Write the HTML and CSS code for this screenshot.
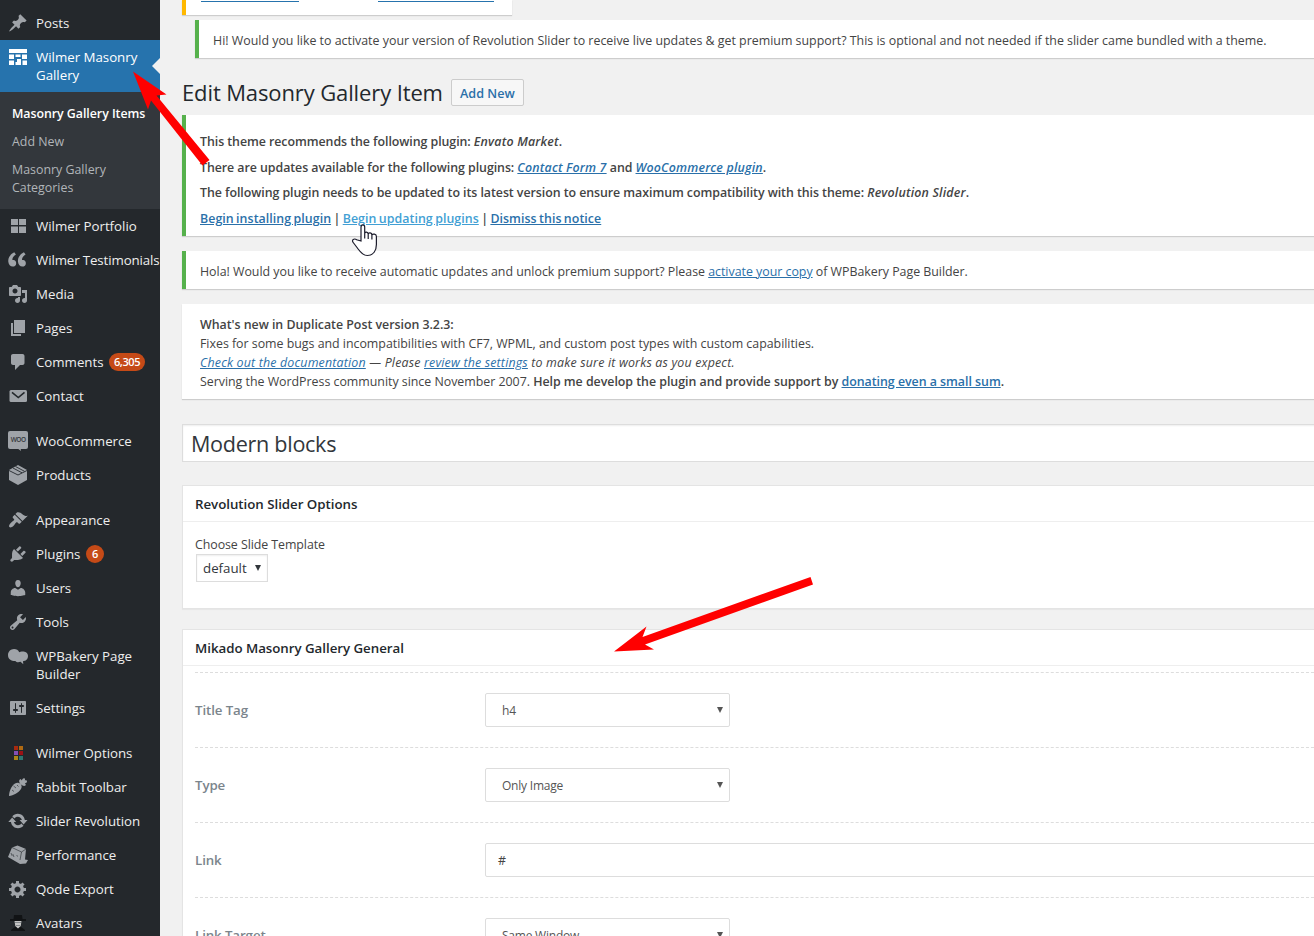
FILE: index.html
```html
<!DOCTYPE html>
<html lang="en">
<head>
  <meta charset="UTF-8">
  <title>Edit Masonry Gallery Item</title>
  <link rel="stylesheet" href="styles.css">
</head>
<body>

<div class="layout">
  <nav class="sidebar">
    <a class="menu-item">
      <svg class="icon" viewBox="0 0 20 20"><path d="M10.44 3.02l1.82-1.82 6.36 6.35-1.83 1.82c-1.05-.68-2.48-.57-3.41.36l-.75.75c-.92.93-1.04 2.35-.35 3.41l-1.83 1.82-2.41-2.41-2.8 2.79c-.42.42-3.38 2.71-3.8 2.29s1.86-3.39 2.28-3.81l2.79-2.79L4.1 9.36l1.83-1.82c1.05.69 2.48.57 3.4-.36l.75-.75c.93-.92 1.05-2.35.36-3.41z"/></svg>
      <span>Posts</span>
    </a>
    <a class="menu-item current">
      <svg class="icon" viewBox="0 0 20 20"><path d="M1 2h18v4H1zM1 12V7.500h5V12zM7.500 10V7.500h5V10zM14 12V7.500h5V12zM7.500 18v-3H9v-3h4v6zM1 18v-4.500h5V18zM14.500 18v-4.500H19V18z"/></svg>
      <span>Wilmer Masonry Gallery</span>
    </a>
    <div class="submenu">
      <a class="active">Masonry Gallery Items</a>
      <a>Add New</a>
      <a>Masonry Gallery Categories</a>
    </div>
    <a class="menu-item">
      <svg class="icon" viewBox="0 0 20 20"><path d="M3 3h7v6H3zM11 3h7v6h-7zM3 10.500h7V17H3zM11 10.500h7V17h-7z"/></svg>
      <span>Wilmer Portfolio</span>
    </a>
    <a class="menu-item nowrap">
      <svg class="icon" viewBox="0 0 20 20"><path transform="translate(-3.200 -2.600) scale(1.200)" d="M9.490 13.220c0-.74-.2-1.380-.61-1.900-.62-.78-1.830-.88-2.530-.72-.29-1.650 1.110-3.750 2.920-4.650L7.880 4c-2.730 1.300-5.420 4.280-4.960 8.050C3.210 14.430 4.590 16 6.540 16c.85 0 1.560-.25 2.120-.75s.83-1.180.83-2.030zm8.050 0c0-.74-.2-1.380-.61-1.900-.63-.78-1.830-.88-2.530-.72-.29-1.650 1.110-3.750 2.920-4.650L15.930 4c-2.730 1.300-5.410 4.280-4.950 8.050.29 2.380 1.660 3.950 3.610 3.950.85 0 1.560-.25 2.120-.75s.83-1.180.83-2.030z"/></svg>
      <span>Wilmer Testimonials</span>
    </a>
    <a class="menu-item">
      <svg class="icon" viewBox="0 0 20 20"><path d="M13 11V4c0-.55-.45-1-1-1h-1.670L9 1H5L3.670 3H2c-.55 0-1 .45-1 1v7c0 .55.45 1 1 1h10c.55 0 1-.45 1-1zM7 4.500c1.380 0 2.500 1.120 2.500 2.500S8.380 9.500 7 9.500 4.500 8.380 4.500 7 5.620 4.500 7 4.500zM14 6h5v10.500c0 1.380-1.120 2.500-2.500 2.500S14 17.880 14 16.500s1.120-2.500 2.500-2.500c.17 0 .34.020.5.050V9h-3V6zm-4 8.050V13h2v3.500c0 1.380-1.120 2.500-2.500 2.500S7 17.880 7 16.500 8.120 14 9.500 14c.17 0 .34.020.5.050z"/></svg>
      <span>Media</span>
    </a>
    <a class="menu-item">
      <svg class="icon" viewBox="0 0 20 20"><path d="M6 15V2h11v13H6zm-1 1h8v2H3V5h2v11z"/></svg>
      <span>Pages</span>
    </a>
    <a class="menu-item">
      <svg class="icon" viewBox="0 0 20 20"><path d="M5 2h9.500c1.100 0 2 .9 2 2v7c0 1.100-.9 2-2 2H12l-5 5v-5H5c-1.100 0-2-.9-2-2V4c0-1.100.9-2 2-2z"/></svg>
      <span>Comments <b class="count">6,305</b></span>
    </a>
    <a class="menu-item">
      <svg class="icon" viewBox="0 0 20 20"><rect x="1.500" y="4" width="17.500" height="12" rx="1.500"/><path class="cut" d="M4 6.300l6.300 5.200 6.200-5.200"/></svg>
      <span>Contact</span>
    </a>
    <a class="menu-item spaced">
      <svg class="icon" viewBox="0 0 20 20"><rect width="20" height="18" rx="2"/><path d="M9 17l4 3-.5-3z"/><text class="woo" x="2.700" y="11.200">WOO</text></svg>
      <span>WooCommerce</span>
    </a>
    <a class="menu-item">
      <svg class="icon" viewBox="0 0 20 20"><path d="M10 0l9 5v10l-9 5-9-5V5z"/><path class="cut thin" d="M1 5.500l9 4.500 9-4.500M5 3l9 4.800M7.500 1.500l9 4.800"/></svg>
      <span>Products</span>
    </a>
    <a class="menu-item spaced">
      <svg class="icon" viewBox="0 0 20 20"><path d="M14.480 11.060L7.410 3.990l1.500-1.500c.5-.56 2.300-.47 3.510.32 1.210.8 1.430 1.280 2.910 2.100 1.180.64 2.450 1.260 4.450.85zm-.71.71L6.700 4.700 4.930 6.470c-.39.39-.39 1.020 0 1.410l1.060 1.060c.39.39.39 1.030 0 1.420-.6.6-1.430 1.110-2.210 1.690-.35.26-.7.53-1.010.84C1.430 14.230.4 16.080 1.400 17.070c.99 1 2.840-.03 4.180-1.360.31-.31.58-.66.85-1.020.57-.78 1.080-1.610 1.690-2.210.39-.39 1.020-.39 1.410 0l1.060 1.060c.39.39 1.020.39 1.410 0z"/></svg>
      <span>Appearance</span>
    </a>
    <a class="menu-item">
      <svg class="icon" viewBox="0 0 20 20"><path d="M13.110 4.360L9.870 7.600 8 5.730l3.240-3.240c.35-.34 1.050-.2 1.560.32.52.51.66 1.210.31 1.550zm-8 1.770l.91-1.120 9.010 9.010-1.190.84c-.71.71-2.630 1.160-3.820 1.160H6.140L4.900 17.260c-.59.59-1.540.59-2.120 0-.59-.58-.59-1.530 0-2.120l1.240-1.240v-3.880c0-1.130.4-3.190 1.090-3.890zm7.260 3.970l3.240-3.240c.34-.35 1.040-.21 1.550.31.52.51.66 1.210.31 1.550l-3.240 3.250z"/></svg>
      <span>Plugins <b class="count">6</b></span>
    </a>
    <a class="menu-item">
      <svg class="icon" viewBox="0 0 20 20"><path d="M10 9.250c-2.270 0-2.730-3.440-2.730-3.440C7 4.020 7.820 2 9.970 2c2.160 0 2.980 2.020 2.710 3.810 0 0-.41 3.440-2.680 3.440zm0 2.570L12.720 10c2.390 0 4.520 2.330 4.520 4.530v2.490s-3.650 1.130-7.240 1.130c-3.650 0-7.240-1.130-7.240-1.130v-2.490c0-2.250 1.940-4.480 4.470-4.480z"/></svg>
      <span>Users</span>
    </a>
    <a class="menu-item">
      <svg class="icon" viewBox="0 0 20 20"><path d="M16.680 9.770c-1.340 1.340-3.300 1.670-4.950.99l-5.410 6.520c-.99.99-2.590.99-3.580 0s-.99-2.590 0-3.570l6.520-5.420c-.68-1.650-.35-3.610.99-4.950 1.280-1.280 3.120-1.620 4.720-1.060l-2.890 2.890 2.820 2.820 2.860-2.870c.53 1.580.18 3.390-1.080 4.650zM3.810 16.210c.4.39 1.040.39 1.430 0 .4-.4.4-1.040 0-1.430-.39-.4-1.030-.4-1.430 0-.39.39-.39 1.030 0 1.430z"/></svg>
      <span>Tools</span>
    </a>
    <a class="menu-item">
      <svg class="icon" viewBox="0 0 20 20"><path d="M6 3c2.500 0 4.300 1.200 5.200 3.200C13 5 20 4.500 20 10c0 3.500-2.500 5-5 5.200l.3 3-2.800-2.400c-2 .8-4 .7-5.200-.8C3 15 0 13 0 9c0-3.200 2.500-6 6-6z"/></svg>
      <span>WPBakery Page Builder</span>
    </a>
    <a class="menu-item">
      <svg class="icon" viewBox="0 0 20 20"><path d="M18 16V4c0-.55-.45-1-1-1H3c-.55 0-1 .45-1 1v12c0 .55.45 1 1 1h14c.55 0 1-.45 1-1zM8 11h1c.55 0 1 .45 1 1s-.45 1-1 1H8v1.500c0 .28-.22.5-.5.5s-.5-.22-.5-.5V13H6c-.55 0-1-.45-1-1s.45-1 1-1h1V5.500c0-.28.22-.5.5-.5s.5.220.5.5V11zm5-2h-1c-.55 0-1-.45-1-1s.45-1 1-1h1V5.500c0-.28.22-.5.5-.5s.5.220.5.5V7h1c.55 0 1 .45 1 1s-.45 1-1 1h-1v5.500c0 .28-.22.5-.5.5s-.5-.22-.5-.5V9z"/></svg>
      <span>Settings</span>
    </a>
    <a class="menu-item spaced">
      <svg class="icon" viewBox="0 0 20 20"><path fill="#a8290f" d="M6 3h4v4H6z"/><path fill="#b06a12" d="M11 3h4v4h-4z"/><path fill="#8350b5" d="M6 8h4v4H6z"/><path fill="#9b1114" d="M11 8h4v4h-4z"/><path fill="#ad8616" d="M6 13h4v4H6z"/><path fill="#2d7671" d="M11 13h4v4h-4z"/></svg>
      <span>Wilmer Options</span>
    </a>
    <a class="menu-item">
      <svg class="icon" viewBox="0 0 20 20"><path d="M1 19c0-4 2-10 6-12.500 2-1.200 4-1 5.500.5s1.500 3.500.3 5.300C10.500 16 5.500 18.500 1 19zM12 6.500c-1.500-2-1-4 .5-4.500L14 3.500c0-1.500 1-2.500 2.300-2.300.8.200.9 1.300.5 2.300 1.200-.5 2.200 0 2.200 1s-1 1.700-2.200 1.700c1 .5 1.200 1.500.7 2.300-1 .7-3 .5-4.500-1z"/><path class="cut hair" d="M5.500 9l2.500 2M9 8l1.500 1.500M4 13l2 1.500"/></svg>
      <span>Rabbit Toolbar</span>
    </a>
    <a class="menu-item">
      <svg class="icon" viewBox="0 0 20 20"><path d="M9.800 2.800c3.800 0 6.600 2.800 7 6.200h2.700L15.600 13.500 11.600 9h2.300c-.5-1.900-2.100-3.300-4.100-3.300-1.400 0-2.600.7-3.400 1.700L4.300 5.200c1.300-1.500 3.300-2.400 5.500-2.400zm.2 14.400c-3.800 0-6.600-2.800-7-6.200H.3L4.200 6.500 8.200 11H5.900c.5 1.900 2.100 3.300 4.100 3.300 1.400 0 2.600-.7 3.400-1.700l2.100 2.200c-1.300 1.500-3.300 2.400-5.500 2.400z"/></svg>
      <span>Slider Revolution</span>
    </a>
    <a class="menu-item">
      <svg class="icon" viewBox="0 0 20 20"><path d="M4 2.500L9.500.5 18 4l-1 10.500 3 .5-2 3.500-6 .5L0 12z"/><path class="cut hair" d="M4 2.500L13.500 7 18 4M13.500 7L12 15M3 8l1 2.500 1-1 1 2.500M8.500 10.500l1.500.8"/></svg>
      <span>Performance</span>
    </a>
    <a class="menu-item">
      <svg class="icon" viewBox="0 0 20 20"><path d="M18 12h-2.180c-.17.7-.44 1.350-.81 1.930l1.540 1.540-2.100 2.100-1.540-1.540c-.58.36-1.230.63-1.910.79V19H8v-2.180c-.68-.16-1.330-.43-1.910-.79l-1.540 1.540-2.120-2.120 1.540-1.540c-.36-.58-.63-1.230-.79-1.910H1V9.030h2.170c.16-.7.44-1.350.8-1.940L2.430 5.550l2.100-2.100 1.540 1.540c.58-.37 1.240-.64 1.930-.81V2h3v2.180c.68.16 1.330.43 1.910.79l1.540-1.540 2.120 2.120-1.540 1.540c.36.59.64 1.240.8 1.940H18V12zm-8.500 1.500c1.660 0 3-1.340 3-3s-1.340-3-3-3-3 1.340-3 3 1.340 3 3 3z"/></svg>
      <span>Qode Export</span>
    </a>
    <a class="menu-item">
      <svg class="icon" viewBox="0 0 20 20"><path fill="#111315" d="M6 2h8l.5 4H18v2H2V6h3.500zM3 17l4-3h6l4 3v1H3z"/><path fill="#c5c5c5" d="M6.500 8h7l-.8 5L10 15.500 7.300 13z"/><path fill="#85898c" d="M7 9h6v1H7zM8 12h4v1H8z"/></svg>
      <span>Avatars</span>
    </a>
  </nav>

  <main class="content">
    <div class="notice warning"><span class="line-a"></span><span class="line-b"></span></div>
    <div class="notice success inset"><p>Hi! Would you like to activate your version of Revolution Slider to receive live updates &amp; get premium support? This is optional and not needed if the slider came bundled with a theme.</p></div>

    <div class="heading">
      <h1>Edit Masonry Gallery Item</h1>
      <a class="add-new">Add New</a>
    </div>

    <div class="notice success strong">
      <p>This theme recommends the following plugin: <em>Envato Market</em>.</p>
      <p>There are updates available for the following plugins: <em><a>Contact Form 7</a></em> and <em><a>WooCommerce plugin</a></em>.</p>
      <p>The following plugin needs to be updated to its latest version to ensure maximum compatibility with this theme: <em>Revolution Slider</em>.</p>
      <p class="actions"><a>Begin installing plugin</a> | <a class="hover">Begin updating plugins</a> | <a>Dismiss this notice</a></p>
    </div>

    <div class="notice success hola"><p>Hola! Would you like to receive automatic updates and unlock premium support? Please <a>activate your copy</a> of WPBakery Page Builder.</p></div>

    <div class="notice plain">
      <p><b>What's new in Duplicate Post version 3.2.3:</b></p>
      <p>Fixes for some bugs and incompatibilities with CF7, WPML, and custom post types with custom capabilities.</p>
      <p><em><a>Check out the documentation</a> — Please <a>review the settings</a> to make sure it works as you expect.</em></p>
      <p>Serving the WordPress community since November 2007. <b>Help me develop the plugin and provide support by <a>donating even a small sum</a>.</b></p>
    </div>

    <div class="title-input">Modern blocks</div>

    <section class="postbox slider-options">
      <h2>Revolution Slider Options</h2>
      <div class="inside">
        <div class="label">Choose Slide Template</div>
        <div class="select small"><span>default</span><i class="caret"></i></div>
      </div>
    </section>

    <section class="postbox">
      <h2>Mikado Masonry Gallery General</h2>
      <div class="fields">
        <div class="field"><label>Title Tag</label><div class="select"><span>h4</span><i class="caret"></i></div></div>
        <div class="field"><label>Type</label><div class="select"><span>Only Image</span><i class="caret"></i></div></div>
        <div class="field"><label>Link</label><div class="text-input">#</div></div>
        <div class="field"><label>Link Target</label><div class="select"><span>Same Window</span><i class="caret"></i></div></div>
      </div>
    </section>
  </main>
</div>

<svg class="overlay" viewBox="0 0 1314 936">
  <path fill="#f00" d="M133 71.500L166.500 94.500 156.500 95.500 209.500 160 202.500 165.500 151 100.500 148 109.500z"/>
  <path fill="#f00" d="M614 651.500L646.500 626.500 642.500 637 810.500 577 813 584.500 645 644.500 654 649.500z"/>
  <path class="hand" d="M361 241V227.200c0-3 3.700-3 3.700 0v6.300c.3-2 3.400-1.800 3.500.5.500-1.700 3.600-1.500 3.700 1 .8-1.500 4.500-1.200 4.500 1.500v8c0 6-3 11-9 11-5 0-7.400-4-10-7.500l-4.200-5.500c-2-2.500 1-4.600 3.500-2.700zM364.700 233v5.500M368.200 234v5M371.900 235v4.500"/>
</svg>

</body>
</html>
```
FILE: styles.css
```css
* {
  box-sizing: border-box;
}

body {
  margin: 0;
  height: 936px;
  overflow: hidden;
  background: #f1f1f1;
  color: #444;
  font-family: "Open Sans", "Noto Sans", sans-serif;
  font-size: 12.4px;
  line-height: 19px;
}

p, h1, h2 {
  margin: 0;
}

.layout {
  display: flex;
  height: 936px;
  overflow: hidden;
}

/* sidebar */
.sidebar {
  flex: none;
  width: 160px;
  padding-top: 6px;
  background: #24282c;
  color: #eee;
  font-size: 13.3px;
  line-height: 18px;
  overflow: hidden;
}

.menu-item {
  display: flex;
  padding: 8px 0;
  position: relative;
}

.menu-item span {
  flex: 1;
  letter-spacing: -0.02px;
}

.menu-item.nowrap span {
  white-space: nowrap;
  letter-spacing: -0.12px;
}

.spaced {
  margin-top: 11px;
}

.icon {
  flex: none;
  width: 20px;
  height: 20px;
  margin: -1px 8px;
  fill: #9fa3a8;
}

.cut {
  fill: none;
  stroke: #24282c;
  stroke-width: 1.6;
}

.thin {
  stroke-width: 0.9;
}

.hair {
  stroke-width: 0.6;
}

.woo {
  fill: #35393d;
  font-size: 6.5px;
  font-weight: 600;
  letter-spacing: -0.5px;
}

.current {
  background: #2673ad;
  color: #fff;
}

.current .icon {
  fill: #fff;
}

.current::after {
  content: "";
  position: absolute;
  right: 0;
  top: 18px;
  border: 8px solid transparent;
  border-left: 0;
  border-right-color: #f1f1f1;
}

.submenu {
  display: flex;
  flex-direction: column;
  padding: 8px 0 7px;
  background: #33373c;
  color: #b1b5b9;
  font-size: 12.4px;
}

.submenu a {
  padding: 5px 12px;
}

.submenu .active {
  color: #fff;
  font-weight: 600;
  letter-spacing: -0.05px;
  white-space: nowrap;
}

.count {
  display: inline-block;
  min-width: 18px;
  height: 18px;
  margin: 0 0 -2px 2px;
  padding: 0 5px;
  border-radius: 9px;
  background: #c54a17;
  color: #fff;
  font-size: 11px;
  font-weight: 600;
  letter-spacing: -0.4px;
  text-align: center;
  vertical-align: top;
}

/* content */
.content {
  flex: none;
  width: 1180px;
  padding-left: 22px;
}

.content a {
  color: #2a70a9;
  text-decoration: underline;
}

.content a.hover {
  color: #429fd4;
}

.notice {
  padding: 11px 14px 8px;
  border-left: 4px solid #fff;
  background: #fff;
  box-shadow: 0 1px 1px rgba(0, 0, 0, 0.15);
  white-space: nowrap;
}

.notice em {
  letter-spacing: 0.18px;
}

.notice b {
  font-weight: 600;
  letter-spacing: -0.03px;
}

.success {
  border-color: #56b14c;
}

.warning {
  display: flex;
  width: 330px;
  height: 15px;
  padding: 0 15px;
  border-color: #ffb800;
}

.line-a {
  width: 98px;
  height: 2px;
  border-bottom: 1px solid #2673ad;
}

.line-b {
  width: 116px;
  height: 2px;
  margin-left: 79px;
  border-bottom: 1px solid #2673ad;
}

.inset {
  height: 38px;
  margin: 5px 0 0 13px;
}

.heading {
  display: flex;
  align-items: center;
  height: 27px;
  margin: 21px 0 9px;
}

h1 {
  color: #23282d;
  font-size: 22px;
  font-weight: 400;
  letter-spacing: -0.12px;
}

.content .add-new {
  width: 73px;
  height: 27px;
  margin-left: 8px;
  padding: 4px 0;
  border: 1px solid #ccc;
  border-radius: 2px;
  background: #f7f7f7;
  font-size: 12.6px;
  font-weight: 600;
  text-align: center;
  text-decoration: none;
}

.strong {
  height: 121px;
  padding-top: 17px;
  font-weight: 600;
  letter-spacing: -0.06px;
}

.strong p {
  height: 25.6px;
}

.strong .actions {
  letter-spacing: 0.05px;
  word-spacing: -0.9px;
}

.hola {
  height: 38px;
  margin: 15px 0;
  letter-spacing: -0.02px;
}

.plain {
  height: 95px;
  letter-spacing: -0.02px;
}

.title-input {
  height: 38px;
  margin: 25px 0 23px;
  padding: 9px 8px;
  border: 1px solid #ddd;
  background: #fff;
  box-shadow: inset 0 1px 2px rgba(0, 0, 0, 0.07);
  color: #32373c;
  font-size: 21.6px;
  letter-spacing: -0.3px;
}

.postbox {
  height: 320px;
  border: 1px solid #e4e4e4;
  background: #fff;
  box-shadow: 0 1px 1px rgba(0, 0, 0, 0.04);
}

.slider-options {
  height: 124px;
  margin-bottom: 20px;
}

h2 {
  height: 36px;
  padding: 9px 12px;
  border-bottom: 1px solid #eee;
  color: #23282d;
  font-size: 13.3px;
  font-weight: 600;
  letter-spacing: -0.03px;
}

.inside {
  padding: 13px 12px;
}

.label {
  letter-spacing: -0.07px;
}

.select {
  display: flex;
  align-items: center;
  justify-content: space-between;
  width: 245px;
  height: 34px;
  padding: 0 6px 0 16px;
  border: 1px solid #ddd;
  border-radius: 2px;
  color: #555;
  font-size: 12px;
  letter-spacing: -0.22px;
}

.small {
  width: 72px;
  height: 28px;
  margin-left: 1px;
  padding: 0 6px;
  border-radius: 0;
  box-shadow: inset 0 1px 2px rgba(0, 0, 0, 0.07);
  color: #32373c;
  font-size: 13.3px;
  letter-spacing: 0;
}

.caret {
  border: 3.5px solid transparent;
  border-top: 6px solid currentColor;
  border-bottom: 0;
}

.fields {
  padding: 6px 0 0 12px;
}

.field {
  display: flex;
  height: 75px;
  padding-top: 20px;
  border-top: 1px dashed #ddd;
}

.field label {
  width: 290px;
  padding-top: 8px;
  color: #7b858c;
  font-size: 13.3px;
  font-weight: 600;
  letter-spacing: -0.1px;
}

.text-input {
  flex: 1;
  height: 34px;
  padding: 7px 12px;
  border: 1px solid #ddd;
  border-radius: 2px;
}

/* arrows and pointer drawn over the page */
.overlay {
  position: absolute;
  left: 0;
  top: 0;
  width: 1314px;
  height: 936px;
}

.hand {
  fill: #fff;
  stroke: #1c1c2c;
  stroke-width: 1.2;
}
```
